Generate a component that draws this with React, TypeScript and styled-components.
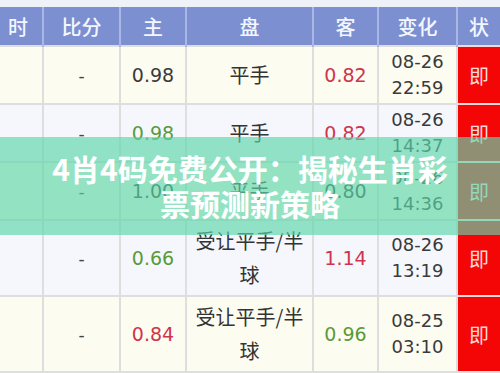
import React from "react";
import styled, { createGlobalStyle } from "styled-components";

const GlobalStyle = createGlobalStyle`
  html, body {
    margin: 0;
    padding: 0;
    background: #f1f3f8;
    overflow: hidden;
  }
`;

const Frame = styled.div`
  position: relative;
  width: 500px;
  height: 373px;
  overflow: hidden;
  padding-top: 7px;
  box-sizing: border-box;
  background: #eef1f7;
  font-family: "Noto Sans CJK SC", "DejaVu Sans", sans-serif;
`;

const Table = styled.table`
  width: 500px;
  table-layout: fixed;
  border-collapse: collapse;
`;

const HeadCell = styled.th`
  height: 38px;
  padding: 0;
  background: #7b8fd1;
  color: #f4f6ff;
  font-size: 20px;
  font-weight: 500;
  text-align: center;
  border-left: 2px solid #aab6e4;
  &:first-child {
    border-left: none;
    padding-right: 6px;
  }
`;

const Row = styled.tr<{ $alt: boolean }>`
  background: ${(p) => (p.$alt ? "#f5f7fc" : "#fdfcf1")};
`;

const Cell = styled.td`
  padding: 2px 0;
  text-align: center;
  vertical-align: middle;
  border: 2px solid #dedede;
  &:first-child {
    border-left: none;
  }
`;

const Dash = styled.span`
  font-family: "DejaVu Sans", sans-serif;
  font-size: 17px;
  color: #444;
`;

const Odds = styled.span<{ $tone: "dark" | "red" | "green" }>`
  font-family: "DejaVu Sans", sans-serif;
  font-size: 19px;
  color: ${(p) =>
    p.$tone === "red" ? "#d0344c" : p.$tone === "green" ? "#5a9a38" : "#3a3a3a"};
`;

const Pan = styled.div`
  padding: 1px 7px;
  font-size: 20px;
  line-height: 34px;
  color: #333;
`;

const Stamp = styled.div`
  font-family: "DejaVu Sans", sans-serif;
  font-size: 18px;
  line-height: 26px;
  color: #3a3a3a;
`;

const StatusCell = styled.td`
  padding: 0;
  text-align: center;
  vertical-align: middle;
  background: #f50606;
  color: #ffd8d8;
  font-size: 20px;
  border: 2px solid #f3dada;
  border-right: none;
`;

const Banner = styled.div`
  position: absolute;
  left: 0;
  right: 0;
  top: 137px;
  height: 98px;
  display: flex;
  align-items: center;
  justify-content: center;
  background: rgba(92, 214, 171, 0.66);
`;

const BannerText = styled.div`
  max-width: 412px;
  text-align: center;
  color: #ffffff;
  font-family: "Noto Sans CJK SC", sans-serif;
  font-weight: 700;
  font-size: 30px;
  line-height: 35px;
`;

type Tone = "dark" | "red" | "green";

interface Line {
  home: string;
  homeTone: Tone;
  pan: string;
  away: string;
  awayTone: Tone;
  date: string;
  time: string;
}

const lines: Line[] = [
  { home: "0.98", homeTone: "dark", pan: "平手", away: "0.82", awayTone: "red", date: "08-26", time: "22:59" },
  { home: "0.98", homeTone: "green", pan: "平手", away: "0.82", awayTone: "red", date: "08-26", time: "14:37" },
  { home: "1.00", homeTone: "dark", pan: "平手", away: "0.80", awayTone: "dark", date: "08-26", time: "14:36" },
  { home: "0.66", homeTone: "green", pan: "受让平手/半球", away: "1.14", awayTone: "red", date: "08-26", time: "13:19" },
  { home: "0.84", homeTone: "red", pan: "受让平手/半球", away: "0.96", awayTone: "green", date: "08-25", time: "03:10" },
];

const widths = [43, 77, 66, 127, 65, 79, 43];
const heads = ["时", "比分", "主", "盘", "客", "变化", "状"];

export default function App() {
  return (
    <Frame>
      <GlobalStyle />
      <Table>
        <colgroup>
          {widths.map((w, i) => (
            <col key={i} style={{ width: w }} />
          ))}
        </colgroup>
        <thead>
          <tr>
            {heads.map((h) => (
              <HeadCell key={h}>{h}</HeadCell>
            ))}
          </tr>
        </thead>
        <tbody>
          {lines.map((l, i) => (
            <Row key={i} $alt={i % 2 === 1}>
              <Cell />
              <Cell>
                <Dash>-</Dash>
              </Cell>
              <Cell>
                <Odds $tone={l.homeTone}>{l.home}</Odds>
              </Cell>
              <Cell>
                <Pan>{l.pan}</Pan>
              </Cell>
              <Cell>
                <Odds $tone={l.awayTone}>{l.away}</Odds>
              </Cell>
              <Cell>
                <Stamp>{l.date}</Stamp>
                <Stamp>{l.time}</Stamp>
              </Cell>
              <StatusCell>即</StatusCell>
            </Row>
          ))}
        </tbody>
      </Table>
      <Banner>
        <BannerText>4肖4码免费公开：揭秘生肖彩票预测新策略</BannerText>
      </Banner>
    </Frame>
  );
}
